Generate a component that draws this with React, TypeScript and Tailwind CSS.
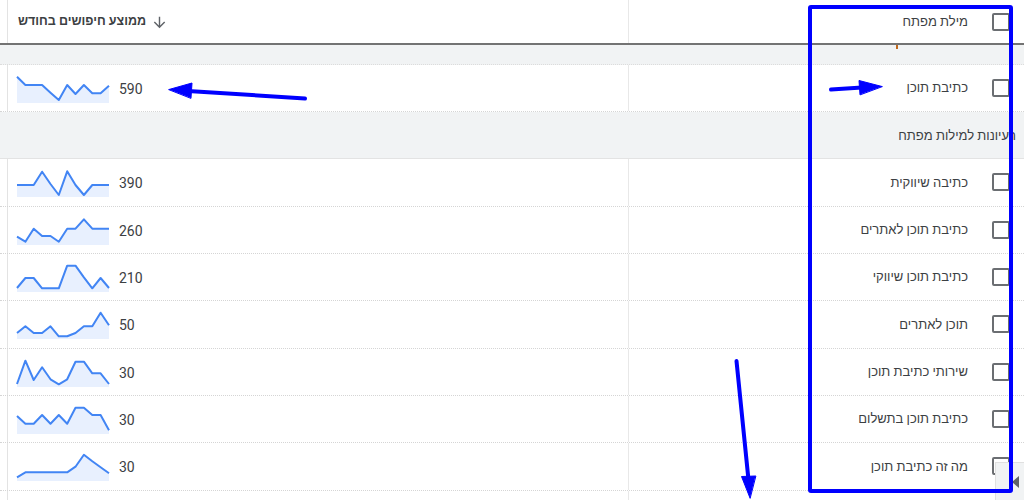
import { ReactNode } from 'react';

type Row = { kw: string; vol: number | null; spark: number[] };

// sparkline points, y in px from top of a 27px box
const TOP_ROW: Row = { kw: 'כתיבת תוכן', vol: 590, spark: [0.7, 9, 9, 9, 16.7, 24, 9, 18, 9, 17.3, 17.3, 9.7] };

const IDEAS: Row[] = [
  { kw: 'כתיבה שיווקית', vol: 390, spark: [15, 15, 15, 1.7, 14, 25, 1.3, 15, 25, 15, 15, 15] },
  { kw: 'כתיבת תוכן לאתרים', vol: 260, spark: [18.7, 23.7, 10.7, 18, 18, 23.7, 10.7, 10.7, 1.3, 10.7, 10.7, 10.7] },
  { kw: 'כתיבת תוכן שיווקי', vol: 210, spark: [23, 13, 13, 23.3, 23.3, 23.3, 0.7, 0.7, 12.3, 23.3, 13, 23] },
  { kw: 'תוכן לאתרים', vol: 50, spark: [21, 14.3, 21, 21, 14.3, 24.3, 24.3, 21, 14.3, 14.3, 0.7, 13.3] },
  { kw: 'שירותי כתיבת תוכן', vol: 30, spark: [24, 0.7, 20, 7.3, 19.3, 24.3, 19.3, 1.7, 1.7, 13.3, 13.3, 24] },
  { kw: 'כתיבת תוכן בתשלום', vol: 30, spark: [9, 16.7, 16.7, 8, 16.7, 8, 16.7, 0.7, 0.7, 8, 8, 23.3] },
  { kw: 'מה זה כתיבת תוכן', vol: 30, spark: [23.3, 18.3, 18.3, 18.3, 18.3, 18.3, 18.3, 12.7, 0.7, 7.3, 13.3, 19.3] },
  // next row, only the top of its chart shows in the window
  { kw: '', vol: null, spark: [20, 18, 18, 15, 15, 12, 12, 8, 0.7, 10, 12, 14] },
];

function Spark({ pts }: { pts: number[] }) {
  const w = 92;
  const h = 27;
  const step = w / (pts.length - 1);
  const line = pts.map((y, i) => `${(i * step).toFixed(1)},${y}`).join(' ');
  return (
    <svg width={w} height={h} viewBox={`0 0 ${w} ${h}`} className="shrink-0 overflow-visible">
      <polygon points={`0,${h} ${line} ${w},${h}`} fill="#e8f0fe" />
      <polyline points={line} fill="none" stroke="#4285f4" strokeWidth={2} strokeLinejoin="round" />
    </svg>
  );
}

function Checkbox() {
  return <span className="block w-[18px] h-[18px] shrink-0 rounded-[2px] border-2 border-[#6b6e72] bg-white" />;
}

function WhiteRow({ left, right, className = '' }: { left: ReactNode; right: ReactNode; className?: string }) {
  return (
    <div className={`grid grid-cols-[8px_621px_1fr] bg-white ${className}`}>
      <div className="border-r border-[#e3e3e3]" />
      <div className="border-r border-[#e8e8e8] relative">{left}</div>
      <div className="flex items-center justify-end pr-[14px]">{right}</div>
    </div>
  );
}

function KeywordRow({ row }: { row: Row }) {
  return (
    <WhiteRow
      className="h-[47.33px] border-b border-dotted border-[#d5d5d5]"
      left={
        <div className="flex items-start pl-[9px] pt-[11px]">
          <Spark pts={row.spark} />
          {row.vol !== null && (
            <span className="ml-[10px] mt-[5px] text-[14px] leading-[16px] text-[#3c4043]">{row.vol}</span>
          )}
        </div>
      }
      right={
        row.kw ? (
          <div className="flex items-center gap-[24px]">
            <span dir="rtl" className="text-[13px] text-[#3c4043]">{row.kw}</span>
            <Checkbox />
          </div>
        ) : null
      }
    />
  );
}

function Arrows() {
  return (
    <svg className="absolute inset-0 pointer-events-none" width={1024} height={500} viewBox="0 0 1024 500">
      <g fill="#0000ff" stroke="#0000ff" strokeLinecap="round">
        {/* left arrow to 590 */}
        <line x1={305} y1={98.5} x2={188} y2={91} strokeWidth={4} />
        <polygon points="169,89.5 192,83 191,98" strokeWidth={1} />
        {/* right arrow to keyword */}
        <line x1={831} y1={89.5} x2={862} y2={87.5} strokeWidth={4} />
        <polygon points="882,86.5 859,80.5 860,94.5" strokeWidth={1} />
        {/* down arrow */}
        <line x1={736.5} y1={361} x2={748.5} y2={480} strokeWidth={4} />
        <polygon points="750,498 741.5,476.5 755.5,476" strokeWidth={1} />
      </g>
    </svg>
  );
}

export default function App() {
  return (
    <div className="relative w-[1024px] h-[500px] overflow-hidden bg-white font-[Roboto,'Liberation_Sans',Arial,sans-serif]">
      {/* header */}
      <div className="grid grid-cols-[8px_621px_1fr] h-[45px] border-b-2 border-[#737373]">
        <div className="border-r border-[#e3e3e3]" />
        <div className="border-r border-[#e8e8e8] flex items-center pl-[10px] gap-[5px]">
          <span dir="rtl" className="text-[12.5px] font-bold text-[#3c4043]">ממוצע חיפושים בחודש</span>
          <svg width={17} height={17} viewBox="0 0 24 24" className="mt-[1px]">
            <path d="M20 12l-1.41-1.41L13 16.17V4h-2v12.17l-5.58-5.59L4 12l8 8 8-8z" fill="#5f6368" />
          </svg>
        </div>
        <div className="flex items-center justify-end pr-[14px] gap-[24px]">
          <span dir="rtl" className="text-[13px] text-[#3c4043]">מילת מפתח</span>
          <Checkbox />
        </div>
      </div>

      {/* summary band */}
      <div className="relative h-[20px] bg-[#f1f3f4] border-b border-dotted border-[#dcdcdc]">
        <span className="absolute left-[896px] top-0 w-[1.5px] h-[4px] bg-[#c26a1e]" />
      </div>

      <KeywordRow row={TOP_ROW} />

      {/* section header */}
      <div className="h-[47px] bg-[#f1f3f4] border-b border-[#e3e3e3] flex items-center justify-end pr-[8px]">
        <span dir="rtl" className="text-[13px] text-[#3c4043]">רעיונות למילות מפתח</span>
      </div>

      {IDEAS.map((r, i) => (
        <KeywordRow key={i} row={r} />
      ))}

      {/* horizontal scroll button */}
      <div className="absolute left-[995px] top-[462px] w-[29px] h-[38px] bg-[#f1f3f4] border-l border-t border-[#e0e0e0] flex items-center justify-end pr-[5px]">
        <span className="block w-0 h-0 border-y-[6px] border-y-transparent border-r-[7px] border-r-[#5f6368]" />
      </div>

      {/* annotations */}
      <div className="absolute left-[808px] top-[5px] w-[205px] h-[488px] border-4 border-[#0000ff] rounded-[3px] pointer-events-none" />
      <Arrows />
    </div>
  );
}
